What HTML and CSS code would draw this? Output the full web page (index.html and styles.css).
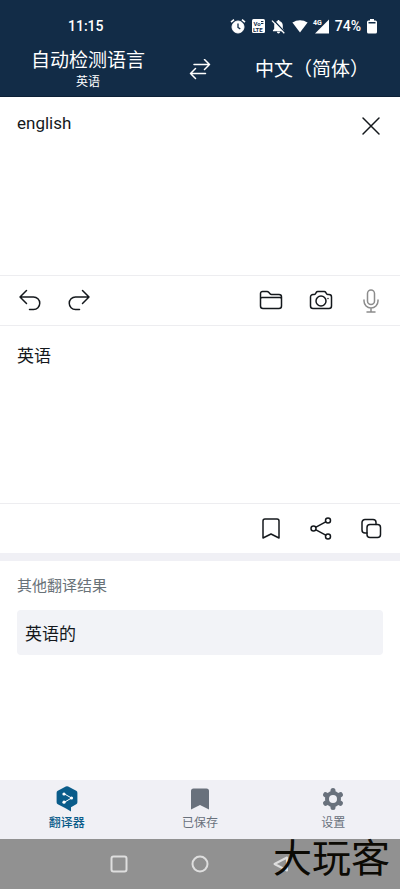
FILE: index.html
```html
<!DOCTYPE html>
<html lang="zh-CN">
<head>
<meta charset="utf-8">
<meta name="viewport" content="width=device-width, initial-scale=1">
<title>翻译器</title>
<link rel="stylesheet" href="styles.css">
</head>
<body>
<header class="header">
  <div class="status">
    <time class="clock">11:15</time>
    <div class="status-icons">
      <svg width="16" height="16" viewBox="0 0 16 16" fill="none" stroke="#fff"><circle cx="8" cy="9" r="6" fill="#fff"/><path d="M1 4.2 4 1.6M15 4.2 12 1.6" stroke-width="1.6"/><path d="M8 5.5v4l2.3 1.4" stroke="#122c47" stroke-width="1.3"/></svg>
      <svg class="volte" width="13" height="14" viewBox="0 0 13 14"><rect width="13" height="14" rx="1.5" fill="#fff"/><g fill="#122c47"><text x="1.5" y="6.5">Vo</text><text x="1" y="12.7">LTE</text></g><path d="M9 2.5h2.4M9 4.5h2.4" stroke="#122c47"/></svg>
      <svg width="15" height="15" viewBox="0 0 15 15"><path d="M7.5 1c.7 0 1 .5 1 1.1 2.2.6 3.3 2.3 3.3 4.5v3.2l1.3 1.6v.8H1.9v-.8l1.3-1.6V6.6c0-2.2 1.1-3.9 3.3-4.5 0-.6.3-1.1 1-1.1zM6 12.8h3c0 1-.6 1.6-1.5 1.6S6 13.8 6 12.8z" fill="#fff"/><path d="m2.2.8 12 13" stroke="#122c47" stroke-width="1.5"/><path d="m1 1.6 12.3 12.7" stroke="#fff" stroke-width="1.3"/></svg>
      <svg width="16" height="14" viewBox="0 0 16 14"><path d="M8 13.5 0.4 3.6C4.8 0.3 11.2 0.3 15.6 3.6z" fill="#fff"/></svg>
      <svg class="signal" width="15" height="16" viewBox="0 0 15 16"><path d="M15 1.5V15.5H1z" fill="#fff"/><text x="-1" y="6.5" fill="#fff">4G</text></svg>
      <span class="percent">74%</span>
      <svg width="10" height="15" viewBox="0 0 10 15"><path d="M3 0h4v1.5h1.5Q10 1.5 10 3v10q0 1.5-1.5 1.5h-7Q0 14.5 0 13V3q0-1.5 1.5-1.5H3z" fill="#fff"/><path d="M1.5 3h7v1.5h-7z" fill="#122c47"/></svg>
    </div>
  </div>
  <div class="languages">
    <button class="language"><span class="language-name">自动检测语言</span><span class="language-hint">英语</span></button>
    <button class="swap" aria-label="交换语言"><svg width="22" height="22" viewBox="0 0 22 22" fill="none" stroke="#fff" stroke-width="1.5" stroke-linecap="round" stroke-linejoin="round"><path d="M5 5.5h15.500M15.500 0.500l5 5-5 5M16.500 14.500H1.500M6.500 9.500l-5 5 5 5"/></svg></button>
    <button class="language"><span class="language-name">中文（简体）</span></button>
  </div>
</header>
<main class="main">
  <section class="panel">
    <textarea class="source" aria-label="原文">english</textarea>
    <button class="icon clear" aria-label="清除"><svg width="24" height="24" viewBox="0 0 24 24"><path d="m4 4 16 16M20 4 4 20"/></svg></button>
  </section>
  <div class="toolbar">
    <button class="icon" aria-label="撤销"><svg width="24" height="24" viewBox="0 0 24 24"><path d="M9.500 1.500 3 8l6.500 6.500M3 8h13.500a6 6 0 0 1 0 12.500H12.500"/></svg></button>
    <button class="icon" aria-label="重做"><svg width="24" height="24" viewBox="0 0 24 24"><path d="M15.500 1.500 22 8l-6.500 6.500M22 8H8.500a6 6 0 0 0 0 12.500H12.500"/></svg></button>
    <button class="icon push" aria-label="打开文件"><svg width="24" height="24" viewBox="0 0 24 24"><path d="M1.500 8.500V4.500a2 2 0 0 1 2-2H8q1 0 1.700.8l1.300 1.500q.6.700 1.500.7h7.500a2.500 2.500 0 0 1 2.500 2.500v9a2.500 2.500 0 0 1-2.500 2.500H4A2.500 2.500 0 0 1 1.500 17zM1.500 10a1.500 1.500 0 0 1 1.500-1.500h18a1.500 1.500 0 0 1 1.500 1.500"/></svg></button>
    <button class="icon" aria-label="拍照"><svg width="24" height="24" viewBox="0 0 24 24"><path d="M1.500 8A2.500 2.500 0 0 1 4 5.500h1q1 0 1.500-.9l.7-1.100q.6-1 1.600-1h6.400q1 0 1.600 1l.7 1.100q.5.900 1.500.9h1A2.500 2.500 0 0 1 22.500 8v9a2.500 2.500 0 0 1-2.500 2.500H4A2.500 2.500 0 0 1 1.500 17z"/><circle cx="12" cy="12" r="5"/><path d="M19 9.500v.1"/></svg></button>
    <button class="icon muted" aria-label="语音输入" disabled><svg width="24" height="24" viewBox="0 0 24 24"><rect x="8.500" y="1" width="7" height="14.500" rx="3.500"/><path d="M5 11v1a7 7 0 0 0 14 0v-1M12 19v4M8 23h8"/></svg></button>
  </div>
  <section class="panel output">
    <p class="result">英语</p>
  </section>
  <div class="toolbar plain">
    <button class="icon push" aria-label="收藏"><svg width="24" height="24" viewBox="0 0 24 24"><path d="M4 4a2 2 0 0 1 2-2h12a2 2 0 0 1 2 2V21l-8-4-8 4z"/></svg></button>
    <button class="icon" aria-label="分享"><svg width="24" height="24" viewBox="0 0 24 24"><circle cx="4.500" cy="11.500" r="2.500"/><circle cx="19" cy="3.500" r="2.500"/><circle cx="19" cy="19.500" r="2.500"/><path d="m7 10.200 9.700-5.400M7 12.800l9.700 5.400"/></svg></button>
    <button class="icon" aria-label="复制"><svg width="24" height="24" viewBox="0 0 24 24"><rect x="8" y="7.500" width="13.500" height="13" rx="3"/><path d="M8 16H6a3 3 0 0 1-3-3V5.500a3 3 0 0 1 3-3h8a3 3 0 0 1 3 3v2"/></svg></button>
  </div>
  <section class="alternatives">
    <h2 class="alternatives-title">其他翻译结果</h2>
    <button class="alternative">英语的</button>
  </section>
</main>
<nav class="tabs">
  <a class="tab active" href="#translate"><svg width="28" height="28" viewBox="0 0 28 28"><path d="M12.800 1.500q1.200-.6 2.400 0l8 4.300q1.200.7 1.200 2v9.400q0 1.300-1.200 2L18 22.200V26.500l-5-3-8.200-4.300q-1.200-.7-1.200-2V7.800q0-1.300 1.200-2z" fill="#0a5c8a"/><path d="m11.500 9 7 4-7 4.200" fill="none" stroke="#fff"/><g fill="#fff"><circle cx="11" cy="9" r="1.600"/><circle cx="18.500" cy="13" r="1.600"/><circle cx="11" cy="17.200" r="1.600"/></g></svg><span>翻译器</span></a>
  <a class="tab" href="#saved"><svg width="28" height="28" viewBox="0 0 28 28"><path d="M5 6q0-2.500 2.500-2.500h13Q23 3.500 23 6v18.500l-9-4.500-9 4.500z" fill="#69717c"/></svg><span>已保存</span></a>
  <a class="tab" href="#settings"><svg width="28" height="28" viewBox="0 0 28 28" fill="none" stroke="#69717c"><circle cx="14" cy="14" r="6" stroke-width="4"/><path d="M14 5.500v1M14 21.500v1M6.600 9.700l.9.500M20.500 17.800l.9.500M6.600 18.300l.9-.5M20.500 10.200l.9-.5" stroke-width="5" stroke-linecap="round"/></svg><span>设置</span></a>
</nav>
<footer class="system">
  <button class="system-key" aria-label="最近任务"><svg width="20" height="20" viewBox="0 0 20 20"><rect x="2.500" y="2.500" width="15" height="15" rx="2"/></svg></button>
  <button class="system-key" aria-label="主屏幕"><svg width="20" height="20" viewBox="0 0 20 20"><circle cx="10" cy="10" r="7.500"/></svg></button>
  <button class="system-key" aria-label="返回"><svg width="20" height="20" viewBox="0 0 20 20"><path d="M16 3.500v13L3.500 10z"/></svg></button>
  <span class="watermark">大玩客</span>
</footer>
</body>
</html>
```
FILE: styles.css
```css
* {
  box-sizing: border-box;
}

body {
  margin: 0;
  min-height: 100vh;
  display: flex;
  flex-direction: column;
  background: #fff;
  color: #14181c;
  font-family: Roboto, "Noto Sans CJK SC", sans-serif;
  font-size: 17px;
}

button {
  padding: 0;
  border: 0;
  background: none;
  color: inherit;
  font: inherit;
}

svg {
  display: block;
  flex: none;
}

.header {
  background: #122c47;
  color: #fff;
  border-bottom: 1px solid #0c2036;
}

.status {
  display: flex;
  align-items: center;
  justify-content: space-between;
  height: 44px;
  padding: 8px 23px 0 68px;
}

.clock {
  font-size: 14px;
  font-weight: 500;
}

.status-icons {
  display: flex;
  align-items: center;
  gap: 6px;
}

.percent {
  font-size: 14px;
  font-weight: 500;
}

.volte text {
  font-size: 6px;
  font-weight: 700;
}

.signal {
  overflow: visible;
}

.signal text {
  font-size: 7px;
  font-weight: 700;
}

.languages {
  display: grid;
  grid-template-columns: 1fr 48px 1fr;
  align-items: center;
  height: 52px;
}

.language {
  display: flex;
  flex-direction: column;
  align-items: center;
}

.language-name {
  font-size: 19px;
  line-height: 24px;
}

.language-hint {
  font-size: 12px;
  line-height: 18px;
}

.swap {
  display: flex;
  justify-content: center;
}

.main {
  flex: 1;
  display: flex;
  flex-direction: column;
}

.panel {
  display: flex;
  align-items: flex-start;
  min-height: 178px;
  padding: 16px 16px 16px 17px;
}

.output {
  min-height: 177px;
}

.source {
  flex: 1;
  min-width: 0;
  height: 144px;
  padding: 0;
  border: 0;
  outline: 0;
  resize: none;
  background: none;
  color: inherit;
  font: inherit;
  line-height: 20px;
}

.result {
  margin: 0;
  padding-top: 2px;
  line-height: 24px;
}

.icon {
  width: 26px;
  height: 26px;
  display: flex;
  align-items: center;
  justify-content: center;
}

.icon svg {
  fill: none;
  stroke: #14181c;
  stroke-width: 1.5;
  stroke-linecap: round;
  stroke-linejoin: round;
}

.icon.muted svg {
  stroke: #8c8c8c;
}

.toolbar {
  display: flex;
  align-items: center;
  gap: 24px;
  height: 51px;
  padding: 0 16px;
  border-top: 1px solid #ededf0;
  border-bottom: 1px solid #ededf0;
}

.plain {
  height: 50px;
  border-bottom: 0;
}

.push {
  margin-left: auto;
}

.alternatives {
  flex: 1;
  padding: 13px 17px;
  border-top: 8px solid #f0f0f5;
}

.alternatives-title {
  margin: 0 0 12px;
  color: #697278;
  font-size: 15px;
  font-weight: 400;
  line-height: 24px;
}

.alternative {
  width: 100%;
  height: 45px;
  padding: 0 8px;
  border-radius: 4px;
  background: #f2f3f7;
  text-align: left;
}

.tabs {
  display: grid;
  grid-template-columns: repeat(3, 1fr);
  height: 59px;
  padding-top: 5px;
  background: #f0f0f5;
}

.tab {
  display: flex;
  flex-direction: column;
  align-items: center;
  color: #69717c;
  font-size: 12px;
  line-height: 20px;
  text-decoration: none;
}

.active {
  color: #0a5c8a;
  font-weight: 500;
}

.system {
  position: relative;
  display: flex;
  align-items: center;
  justify-content: center;
  gap: 61px;
  height: 50px;
  background: #919191;
}

.system-key svg {
  fill: none;
  stroke: #dedede;
  stroke-width: 2;
  stroke-linejoin: round;
}

.watermark {
  position: absolute;
  right: 10px;
  bottom: 6px;
  color: #0c0a04;
  font-size: 39px;
  line-height: 48px;
}
```
